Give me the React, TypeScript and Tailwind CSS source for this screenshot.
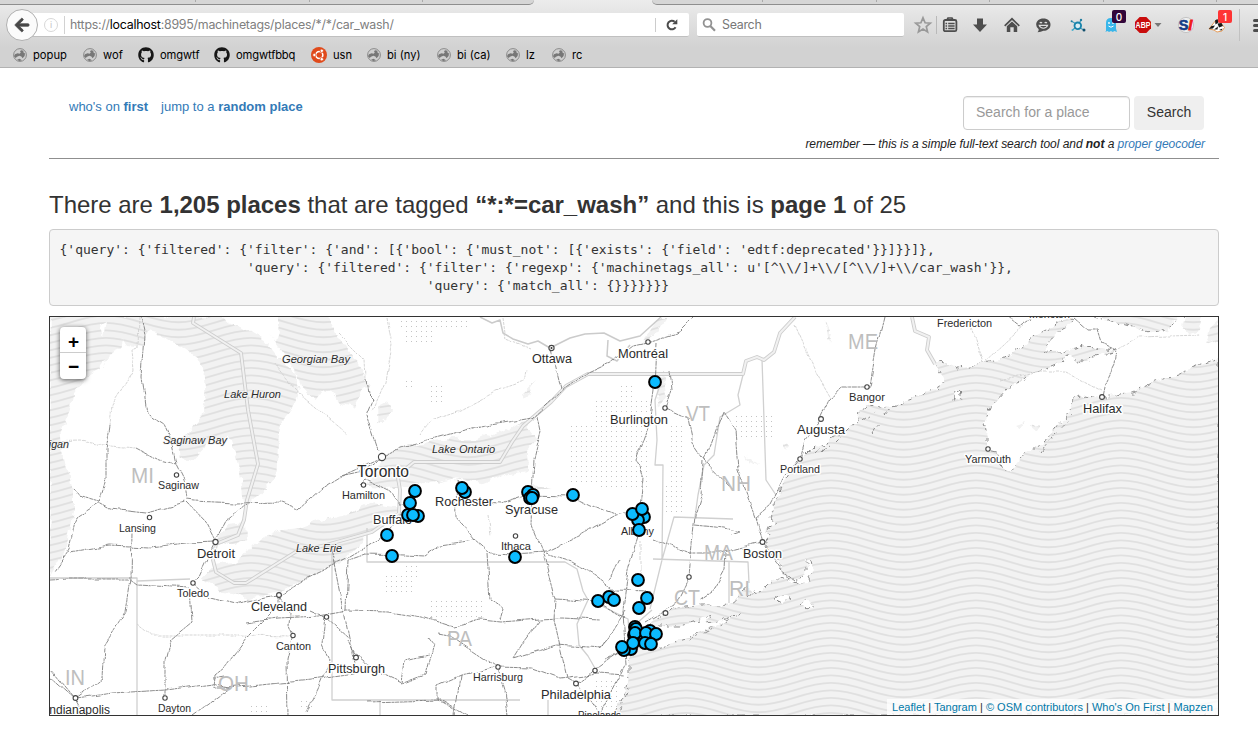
import React from "react";
import { FaGithub, FaArrowLeft } from "react-icons/fa";

const T = 145;
const GAP = 7.5;
const AMP = 7.2;

const wavePath = Array.from({ length: 25 }, (_, i) => {
  const y = i * GAP - 15;
  const h = T / 2;
  const c = h * 0.3642;
  return `M0 ${y + AMP}C${c} ${y + AMP} ${h - c} ${y - AMP} ${h} ${y - AMP}C${h + c} ${y - AMP} ${T - c} ${y + AMP} ${T} ${y + AMP}`;
}).join("");

// [text, left, right, baseline, size]
type Label = [string, number, number, number, number];

const cities: Label[] = [
  ["Ottawa", 532, 572, 363, 13],
  ["Montréal", 618, 668, 358, 12.5],
  ["Burlington", 610, 668, 424, 12.5],
  ["Bangor", 849, 885, 401, 11],
  ["Augusta", 797, 845, 434, 13],
  ["Portland", 780, 820, 473, 11],
  ["Fredericton", 937, 992, 327, 10.5],
  ["Moncton", 1029, 1070, 318, 10.5],
  ["Halifax", 1083, 1122, 412.5, 13],
  ["Yarmouth", 965, 1011, 463, 11],
  ["Toronto", 357, 409, 477, 16],
  ["Hamilton", 342, 385, 499, 11.5],
  ["Rochester", 435, 493, 506, 13],
  ["Syracuse", 505, 558, 514, 13],
  ["Buffalo", 373, 412, 524, 12.5],
  ["Ithaca", 501, 531, 549.5, 11],
  ["Albany", 621, 654, 535, 11],
  ["Boston", 743, 782, 558, 13],
  ["Saginaw", 158, 199, 489, 11.5],
  ["Lansing", 119, 156, 531.5, 11],
  ["Detroit", 197, 235, 558, 13],
  ["Toledo", 177, 209, 597, 11],
  ["Cleveland", 251, 307, 610.5, 13],
  ["Canton", 276, 311, 649.5, 11],
  ["Pittsburgh", 328, 385, 673, 12.5],
  ["Harrisburg", 473, 523, 681, 11],
  ["Philadelphia", 541, 611, 699, 13],
  ["Dayton", 158, 191, 712, 11],
  ["Indianapolis", 46, 110, 714, 12.5],
  ["Pinelands", 578, 621, 719, 11],
];

const waters: Label[] = [
  ["Georgian Bay", 282, 350, 363, 11],
  ["Lake Huron", 224, 281, 398, 11],
  ["Saginaw Bay", 163, 227, 444, 11],
  ["Lake Michigan", 0, 69, 448, 11],
  ["Lake Ontario", 432, 495, 453, 11],
  ["Lake Erie", 296, 342, 552, 11],
];

const states: Label[] = [
  ["MI", 131, 154, 483, 22],
  ["ME", 848, 878, 349, 22],
  ["VT", 686, 710, 421, 22],
  ["NH", 721, 751, 491, 22],
  ["MA", 704, 733, 560, 22],
  ["CT", 674, 700, 605, 22],
  ["RI", 729, 750, 596, 22],
  ["PA", 447, 472, 646, 22],
  ["OH", 218, 249, 691, 22],
  ["IN", 65, 85, 685, 22],
];

const dots: [number, number, number][] = [
  [551.5, 348, 2.6], [648, 342, 2.2], [665, 408, 2.2], [867, 387, 2.2], [821, 419, 2.4],
  [800, 459, 2.2], [1102, 397, 2.4], [988, 449, 2.2], [382, 457, 3.6], [363.5, 485, 2.2],
  [515.5, 536, 2.2], [762.5, 542, 2.4], [176.5, 475, 2.2], [149.5, 517.5, 2.2], [215.5, 542, 2.6],
  [193, 583, 2.2], [279, 595, 2.4], [293, 635.5, 2.2], [326.5, 617, 2.2], [356, 657.5, 2.4],
  [498, 667, 2.2], [576, 683.5, 2.4], [595, 670.5, 2.2], [165, 698, 2.2], [75.5, 698, 2.4],
  [689, 577, 2.2], [665.5, 613, 2.4],
];

const markers: [number, number][] = [
  [655, 382], [415, 491], [410, 503], [408, 515], [418, 516], [413, 515], [387, 535], [392, 556],
  [465, 492], [462, 488], [528, 492], [533, 495], [530, 498], [532, 498], [573, 495], [515, 557],
  [644, 517], [638, 520], [632.5, 514], [642, 509], [639, 530], [638, 580], [647, 598], [639, 608],
  [609, 597], [598, 601], [614, 600], [635, 627], [636, 629], [634, 635], [635, 633], [650, 631],
  [646, 633], [656, 634], [645, 643], [651, 644], [631, 649], [624, 650], [633, 643], [622, 647],
];

const ocean =
  "M613 716L620 703L625 690L629 672L629 657L633 655L641 641L645 627L656 618L667 613L675 607L700 605L723 605L732 603L738 598L743 590L747 585L752 594L762 591L770 583L780 578L790 582L800 583L808 582L813 572L811 562L804 558L808 565L806 574L797 580L788 579L783 575L782 565L776 557L772 553L764 543L770 535L767 530L777 523L770 518L774 510L773 504L777 495L787 477L796 462L807 453L815 445L823 447L830 438L843 433L850 426L857 425L859 412L867 405L880 407L897 404L912 399L930 390L938 389L944 378L937 366L939 361L957 368L971 367L983 363L1000 360L1011 354L1020 348L1029 340L1037 335L1053 327L1067 317L1073 320L1060 332L1048 342L1043 351L1060 352L1085 347L1117 350L1098 356L1078 362L1070 355L1062 362L1047 368L1025 378L1003 393L990 408L985 422L988 437L988 450L997 452L1002 466L1010 473L1018 462L1027 450L1035 450L1043 445L1058 424L1070 410L1076 398L1087 395L1095 397L1107 398L1120 394L1133 392L1150 384L1167 377L1180 375L1187 370L1205 363L1219 358V716Z";

const lakes = [
  "M5 15L520 20L540 40L600 60L650 90L690 140L740 190L755 240L735 290L700 330L690 400L685 500L640 550L590 590L575 480L545 380L500 385L460 420L430 455L395 440L390 400L415 375L435 350L460 320L475 250L470 190L445 140L390 100L340 85L325 65L300 60L285 110L240 105L225 85L215 115L180 130L170 170L110 200L75 250L70 290L35 370L40 420L60 480L75 540L75 600L60 690L40 740L5 800Z",
  "M690 15H840L870 80L900 120L926 150L966 230L940 240L916 290L876 280L850 245L820 240L800 270L760 230L740 180L690 110L670 80L690 60Z",
  "M991 290L1020 275L1036 285L1034 305L991 340Z",
  "M956 530L985 470L1006 440L1056 412L1116 400L1206 385L1270 380L1276 365L1330 378L1390 345L1430 340L1476 315L1436 350L1466 390L1436 420L1441 480L1380 490L1300 520L1226 505L1146 520L1056 530L1000 535Z",
  "M460 805L500 765L560 755L590 735L620 700L700 660L750 655L800 635L900 610L976 580L1056 590L1040 630L976 660L890 750L800 790L720 835L690 850L600 870L560 850L520 845Z",
  "M505 690L540 645L590 640L595 690L560 705Z",
];

const islands =
  "M644 631L655 626L680 626L700 620L711 615L706 622L722 620L740 613L725 621L706 630L690 637L665 645L646 649ZM775 600L783 594L791 598L780 603ZM800 607L808 600L813 608ZM953 400L957 388L962 399Z";

const borders = [
  "M194 317L193 323L241 353L248 410L258 464L247 500L244 520L238 535L216 544L213 560L216 572L234 583H246L297 551L326 545L372 532L399 513L400 490L398 478L403 471L414 462H500L512 442L523 426L538 413L551 402L566 386L588 374H743L746 361L757 357L764 360L774 352L780 333L795 317",
  "M912 317L915 331L929 337L927 350L935 364",
];

const stateLines =
  "M50 578H137V716M137 581L190 579M332 548V700H520M367 528V562H565L577 569L583 591L588 600L577 624L579 645L588 656L596 670M600 605L628 619L629 630L652 610M662 560L650 609M662 560L674 517L733 519M662 379L655 400L657 440L655 465L663 465L662 560M743 375L738 395L740 405L720 417L714 455L704 465L698 495L695 517M762 359L766 480L776 495M653 559L748 562L749 583M729 562V603M548 700V716M380 700V716";

const riverLines =
  "M480 317L492 323L500 320L503 333L513 339L528 344L538 341L550 348L570 338L585 334L604 333L620 341L640 336L661 317M608 340L607 356L617 361L630 345";

const roads = [
  "M141 317L145 335L142 376L147 414L164 425L171 440L176 464L184 480L187 500L195 501L235 503L281 502L299 509L322 488L348 472L382 457L400 448L440 438L480 427L532 418L560 392L589 372L613 361L634 345L648 342L679 332L694 317",
  "M110 425L106 450L106 480L99 503L110 509L145 513L186 503M137 448L160 460L176 464M187 503L205 522L215 541L226 520L245 504M99 503L77 517L70 548L55 570M74 488L81 497L99 502",
  "M70 552L110 545L150 547L187 543L215 542L199 577L193 583L210 598L235 604L265 597L279 595L304 579L345 560L387 535L410 503",
  "M50 580L70 579L129 579L137 585L190 588L192 622L170 640L165 660V698M132 532L131 579L126 612L104 647L102 678L75 698L50 668M75 698L113 693L165 690L213 684L228 688L312 680L356 674L332 548M50 676L75 698L85 716M191 716L230 688L214 688L215 675L224 668L247 638L279 606L279 595M224 676L213 678",
  "M279 595L290 614L289 625L293 635L287 660L288 716M247 622L277 618L320 616L348 611L389 612L422 617L454 627L481 620L501 622L540 619L560 618L600 620M310 610L326 617L348 637M326 617L323 645L330 660L318 690L307 712",
  "M347 611L349 560L366 554L405 555L425 556L441 545L475 540L490 553L513 554L545 552L580 535L615 515L639 510M475 540L457 518L456 480L465 502L500 504L526 495L573 496L591 505L615 514",
  "M551 348L561 389M538 415L541 430L534 460L532 495M532 495L531 525L545 560L555 599L554 620L567 678L576 683M656 342L654 390L649 425L637 460L643 480L640 505L638 535L628 570L623 610L625 650L605 660M665 408L688 418L693 443L705 461L733 490M665 408L671 390L669 370",
  "M705 461L720 420L723 412L735 430L738 470L756 520M703 462L701 495L695 515L691 555L689 577L675 605L645 622M653 538L670 545L690 553L720 553L762 542L782 570L795 580M695 525L725 528L740 532L731 535M727 553L726 570L715 590L700 600",
  "M884 317L876 350L870 387L842 387L830 400L821 419L805 440L800 459L783 480L770 505L755 518L762 542",
  "M487 553L490 600L503 609L500 620M427 637L433 645L425 675L402 684L405 660L428 655M439 633L450 635L475 652L498 667L532 668L560 678L600 673L624 675M498 667L505 690L508 716M498 667L460 675L437 685L437 700L455 710M460 675L455 716",
  "M555 599L598 602L625 617M540 620L525 640L514 658L556 645L602 648L625 610M576 683L602 665L627 645M576 683L590 700L600 714L625 665L624 650M402 684L380 674L353 653L347 640M367 702L440 700L468 716",
  "M1007 317L1020 327L1035 317M1073 317L1088 330L1098 330L1102 343L1117 350L1115 365L1104 387L1102 397M340 475L363 470L382 457M366 380L368 395L373 400L367 415L378 450",
  "M545 554L572 562L595 575L615 590L650 591M360 485L365 480L390 492L398 505L404 505M620 560L610 580M608 640L600 649",
];

const lightRoads =
  "M139 317L138 347L132 350L134 371L112 405L110 425M50 442L80 441L110 446L137 448M137 625L150 635L240 635L293 636M386 317L391 345L385 382L373 410M340 335L365 360L366 380M419 434L430 420L460 410L495 392L525 382L527 370M795 325L815 370L831 398M971 327L983 363L1025 325M1000 380L1040 371L1065 371L1101 390M1120 350L1140 337L1200 335M273 362L298 393L315 407L348 434M640 540L640 580M502 317L505 340L530 350M487 515L490 535";

const dotRects: [number, number, number, number][] = [
  [400, 319, 68, 12], [405, 331, 28, 14], [402, 380, 12, 10], [430, 385, 12, 18],
  [595, 398, 55, 45], [570, 425, 50, 60], [600, 445, 50, 45], [620, 385, 15, 13],
  [670, 425, 15, 60], [665, 485, 18, 30], [735, 415, 40, 25], [385, 575, 30, 18],
  [430, 598, 55, 20], [404, 565, 14, 12], [595, 680, 25, 30], [250, 703, 20, 12], [300, 700, 15, 10],
];

function WorldMap() {
  return (
    <svg viewBox="50 317 1168 398" className="block h-full w-full" fontFamily='"Liberation Sans", sans-serif'>
      <defs>
        <pattern id="waves" x="903.5" y="1" width={T} height={150} patternUnits="userSpaceOnUse">
          <rect width={T} height={150} fill="#f2f2f2" />
          <path d={wavePath} transform="translate(0 -.9)" fill="none" stroke="#e0e0e0" strokeWidth="1.9" />
        </pattern>
        <pattern id="grain" width="5" height="5" patternUnits="userSpaceOnUse">
          <rect x="1" y="1" width="1" height="1" fill="#c4c4c4" />
        </pattern>
        <filter id="rough" filterUnits="userSpaceOnUse" x="40" y="307" width="1190" height="420">
          <feTurbulence type="fractalNoise" baseFrequency="0.1" numOctaves="3" seed="4" />
          <feDisplacementMap in="SourceGraphic" scale="8" xChannelSelector="R" yChannelSelector="G" />
        </filter>
        <filter id="wobble" filterUnits="userSpaceOnUse" x="40" y="307" width="1190" height="420">
          <feTurbulence type="fractalNoise" baseFrequency="0.045" numOctaves="2" seed="9" />
          <feDisplacementMap in="SourceGraphic" scale="7" xChannelSelector="R" yChannelSelector="G" />
        </filter>
        <mask id="seaMask" maskUnits="userSpaceOnUse" x="40" y="307" width="1190" height="420">
          <g filter="url(#rough)">
            <path d={ocean} fill="white" />
            <path d="M1093 310L1105 320L1120 323L1140 329L1153 333L1167 330L1183 312ZM1188 310L1182 325L1190 334L1200 330L1202 312ZM1219 320L1210 328L1206 345L1219 340Z" fill="white" />
            <path d="M661 317L640 345L655 335L668 317ZM656 385L664 372L667 395L660 408ZM825 320L832 335L829 343ZM745 455L758 466L748 463ZM784 444L790 445L787 450ZM522 394L535 382L524 400ZM1030 425L1040 424L1036 430ZM1015 425L1024 422L1020 428ZM530 486L552 488L535 490Z" fill="white" />
            <g transform="translate(48 310) scale(.3333333)" fill="white">
              {lakes.map((d, i) => (
                <path key={i} d={d} />
              ))}
            </g>
            <path d={islands} fill="black" />
            <path d="M100 325L106 322L103 336ZM100 365L106 358L103 375L98 388ZM270 335L280 325L276 343ZM455 440L470 428L485 435L475 440ZM500 425L520 423L510 430Z" fill="black" />
          </g>
        </mask>
      </defs>
      <rect x="50" y="317" width="1168" height="398" fill="#fff" />
      {dotRects.map(([x, y, w, h], i) => (
        <rect key={i} x={x} y={y} width={w} height={h} fill="url(#grain)" />
      ))}
      <rect x="50" y="317" width="1168" height="398" fill="url(#waves)" mask="url(#seaMask)" />
      <g filter="url(#rough)" fill="none" stroke="#8b8b8b" strokeWidth="1" strokeDasharray="5 3 2 6">
        <path d={ocean} />
        <path d={islands} />
        <path d="M1093 317L1120 323L1153 333L1167 330L1183 317M823 452L833 440M815 452L825 440M835 443L845 433M862 422L875 412M872 432L880 420M883 417L893 405M1040 452L1056 432L1072 415M748 598L756 588M690 640L720 625M620 712L630 685" />
      </g>
      <g fill="none" strokeLinejoin="round">
        <path d={stateLines} stroke="#d0d0d0" strokeWidth="1.3" />
        {borders.map((d, i) => (
          <g key={i}>
            <path d={d} stroke="#cdcdcd" strokeWidth="3.8" />
            <path d={d} stroke="#f1f1f1" strokeWidth="2" />
          </g>
        ))}
        <path d={riverLines} stroke="#cbcbcb" strokeWidth="1.5" />
      </g>
      <g filter="url(#wobble)" fill="none" strokeLinejoin="round">
        <path d={lightRoads} stroke="#d0d0d0" strokeWidth=".9" strokeDasharray="3 1" />
        {roads.map((d, i) => (
          <path key={i} d={d} stroke="#777" strokeWidth=".85" strokeDasharray="5 .7 3 .7" />
        ))}
      </g>
      {states.map(([t, a, b, y, s]) => (
        <text key={t} x={a} y={y} fontSize={s} textLength={b - a} lengthAdjust="spacingAndGlyphs" fill="#bebebe">
          {t}
        </text>
      ))}
      {dots.map(([x, y, r], i) => (
        <circle key={i} cx={x} cy={y} r={r} fill="#fff" stroke="#444" strokeWidth="1.1" />
      ))}
      <circle cx="551.5" cy="348" r="1" fill="#333" />
      {cities.map(([t, a, b, y, s]) => (
        <text key={t} x={a} y={y} fontSize={s} textLength={b - a} lengthAdjust="spacingAndGlyphs" fill="#2b2b2b" stroke="#fff" strokeWidth="3" strokeLinejoin="round" paintOrder="stroke">
          {t}
        </text>
      ))}
      {waters.map(([t, a, b, y, s]) => (
        <text key={t} x={a} y={y} fontSize={s} textLength={b - a} lengthAdjust="spacingAndGlyphs" fontStyle="italic" fill="#2b2b2b" stroke="#f5f5f5" strokeWidth="1.5" paintOrder="stroke">
          {t}
        </text>
      ))}
      {markers.map(([x, y], i) => (
        <circle key={i} cx={x} cy={y} r="5.9" fill="#0cbbff" stroke="#000" strokeWidth="2" />
      ))}
    </svg>
  );
}

function Globe() {
  return (
    <svg viewBox="0 0 14 14" className="h-3.5 w-3.5 shrink-0">
      <circle cx="7" cy="7" r="6.4" fill="#cfcfcf" stroke="#8a8a8a" strokeWidth="1" />
      <path d="M1 8.3L2 6.2L4.6 5.2L6.6 5.8L7.8 4.4L7 3.4L8 2.2L10.5 2.8L10.3 4.2L12 5.4L11.6 8L9.6 10.2L8.4 8.6L6.4 7.8L4 8.7L2.6 10ZM4 11.8L6.5 10.8L9 12.2L6.5 13.1Z" fill="#777" />
    </svg>
  );
}

function Ubuntu() {
  return (
    <svg viewBox="0 0 16 16" className="h-4 w-4 shrink-0">
      <circle cx="8" cy="8" r="8" fill="#e04a1b" />
      <circle cx="8.3" cy="8" r="3.5" fill="none" stroke="#fff" strokeWidth="1.6" />
      <g fill="#fff" stroke="#e04a1b" strokeWidth=".8">
        <circle cx="3.4" cy="8" r="1.7" />
        <circle cx="10.8" cy="3.8" r="1.7" />
        <circle cx="10.8" cy="12.2" r="1.7" />
      </g>
    </svg>
  );
}

function Bookmark({ icon, label, className }: { icon: React.ReactNode; label: string; className: string }) {
  return (
    <div className={`flex shrink-0 items-center whitespace-nowrap text-[11.2px] leading-4 text-black ${className}`}>
      {icon}
      <span className="ml-1.5">{label}</span>
    </div>
  );
}

const bookmarks = [
  { icon: <Globe />, label: "popup", className: "w-[70px]" },
  { icon: <Globe />, label: "wof", className: "w-[55px]" },
  { icon: <FaGithub className="h-4 w-4 shrink-0 text-[#161616]" />, label: "omgwtf", className: "w-[76px] tracking-[-0.1px]" },
  { icon: <FaGithub className="h-4 w-4 shrink-0 text-[#161616]" />, label: "omgwtfbbq", className: "w-[97px] tracking-[-0.15px]" },
  { icon: <Ubuntu />, label: "usn", className: "w-[56px]" },
  { icon: <Globe />, label: "bi (ny)", className: "w-[70px]" },
  { icon: <Globe />, label: "bi (ca)", className: "w-[69px]" },
  { icon: <Globe />, label: "lz", className: "w-[46px]" },
  { icon: <Globe />, label: "rc", className: "w-[40px]" },
];

function ToolbarIcons() {
  const box = "h-5 w-5 shrink-0";
  return (
    <div className="flex h-6 items-center text-[#4d4d4d]">
      <svg viewBox="0 0 20 20" className={`${box} ml-[9px]`}>
        <path d="M10 2.8L12.1 7.8L17.3 8.2L13.3 11.6L14.6 17L10 14.1L5.4 17L6.7 11.6L2.7 8.2L7.9 7.8Z" fill="none" stroke="#999" strokeWidth="1.7" />
      </svg>
      <div className="ml-[3px] h-[18px] w-px bg-[#b9b9b9]" />
      <svg viewBox="0 0 20 20" className={`${box} ml-[3px]`}>
        <rect x="3.8" y="5" width="12.6" height="11.2" rx="1.5" fill="none" stroke="currentColor" strokeWidth="1.8" />
        <path d="M7 5L8 3H12L13 5" fill="none" stroke="currentColor" strokeWidth="1.7" />
        <path d="M5.5 8.5h1.6M8.2 8.5h6.4M5.5 11h1.6M8.2 11h6.4M5.5 13.5h1.6M8.2 13.5h6.4" stroke="currentColor" strokeWidth="1.3" />
      </svg>
      <svg viewBox="0 0 20 20" className={`${box} ml-[10px]`}>
        <path d="M7 3.5H13V9.5H17L10 17L3 9.5H7Z" fill="currentColor" />
      </svg>
      <svg viewBox="0 0 20 20" className={`${box} ml-[12px]`}>
        <path d="M2.7 10.8L10 3.8L17.3 10.8" fill="none" stroke="currentColor" strokeWidth="1.7" />
        <path d="M4.8 11.3L10 6.4L15.2 11.3V17H11.7V12.3H8.3V17H4.8Z" fill="currentColor" />
      </svg>
      <svg viewBox="0 0 20 20" className={`${box} ml-[11px]`}>
        <path d="M10.4 3.6C14.8 3.6 17.5 6.2 17.5 9.7S14.5 15.8 10.4 15.8Q8 17.2 4.5 17.2Q5.8 16 5.7 14.2Q3.2 12.5 3.2 9.7C3.2 6.2 6 3.6 10.4 3.6Z" fill="currentColor" />
        <path d="M6.2 10.4H14.6Q13.5 13.2 10.4 13.2T6.2 10.4Z" fill="none" stroke="#ddd" strokeWidth="1.1" />
        <path d="M6.8 8.2q1.1-1.6 2.2 0M11.7 8.2q1.1-1.6 2.2 0" fill="none" stroke="#ddd" strokeWidth="1.2" />
      </svg>
      <svg viewBox="0 0 20 20" className={`${box} ml-[15px]`}>
        <path d="M4 6.5L7.5 8.5M4.5 15L7.5 12.5M12 13L16 15M11.5 8L12.8 5.2" stroke="#3d9cbc" strokeWidth="1.1" />
        <circle cx="9.8" cy="10.8" r="3.3" fill="#d9eef5" stroke="#1683ab" strokeWidth="1.8" />
        <circle cx="13" cy="5" r="1.2" fill="#207da0" />
        <circle cx="16" cy="15" r="1.5" fill="#124f6d" />
        <circle cx="3.6" cy="6.3" r="1" fill="#207da0" />
        <circle cx="4.5" cy="15" r="1" fill="#4db2cf" />
      </svg>
      <div className="relative ml-[13px] h-5 w-5 shrink-0">
        <svg viewBox="0 0 20 20" className="h-5 w-5">
          <path d="M5 16V8Q5 3 10 3T15 8V13.5L16 17L13.5 16L11.7 17L10 16L8 17L6.5 16L4 17Z" fill="#38b6ea" />
          <circle cx="8" cy="8" r=".9" fill="#fff" />
          <circle cx="12" cy="8" r=".9" fill="#fff" />
          <path d="M7.5 11q2.5 2.5 5 0" fill="none" stroke="#fff" />
        </svg>
        <span className="absolute -top-[5px] left-[11px] flex h-[13px] w-[14px] items-center justify-center rounded-[2px] bg-[#32063a] text-[10px] leading-none font-medium text-white">0</span>
      </div>
      <svg viewBox="0 0 20 20" className={`${box} ml-[12px]`}>
        <path d="M6.7 2H13.3L18 6.7V13.3L13.3 18H6.7L2 13.3V6.7Z" fill="#c90d0d" />
        <text x="2.6" y="13" fontSize="8.6" fontWeight="700" textLength="14.8" lengthAdjust="spacingAndGlyphs" fill="#fff" fontFamily="Liberation Sans">ABP</text>
      </svg>
      <svg viewBox="0 0 8 8" className="ml-px h-2 w-2 shrink-0">
        <path d="M.5 2H7.5L4 6Z" fill="#777" />
      </svg>
      <svg viewBox="0 0 20 20" className={`${box} ml-[14px]`}>
        <circle cx="10" cy="10" r="7.6" fill="#eee" stroke="#bbb" strokeWidth=".8" />
        <text x="2.8" y="15.2" fontSize="14.5" fontWeight="700" fill="#153e86" stroke="#153e86" strokeWidth=".6" fontFamily="Liberation Sans">S</text>
        <text x="12" y="15.2" fontSize="14.5" fontWeight="700" fontStyle="italic" fill="#f01818" stroke="#f01818" strokeWidth=".9" fontFamily="Liberation Sans">!</text>
      </svg>
      <div className="relative ml-[11px] h-5 w-5 shrink-0">
        <svg viewBox="0 0 20 20" className="h-5 w-5">
          <path d="M2 14L9 5L14 8L17.5 12.5L15 16L10 17L7 15Z" fill="#fff" stroke="#e5944b" strokeWidth=".9" />
          <path d="M1.8 14L4.5 11L8 10.5L6 13.5ZM8 5.5L10.5 4L11.5 7.5L8.5 9.5ZM10.5 8.5L14.5 8L16 11L12 12.5ZM7 14.5L11 11.5L10.5 14.5ZM12 15L15.5 13.5L14.5 15.5Z" fill="#191919" />
        </svg>
        <span className="absolute -top-[5px] left-[11px] flex h-[13px] w-[14px] items-center justify-center rounded-[2px] bg-[#ff3434] text-[10px] leading-none font-medium text-white">1</span>
      </div>
      <div className="ml-[12px] h-8 w-px bg-[#c1c1c1]" />
      <div className="ml-[13px] flex w-[5px] flex-col gap-[2px]">
        <div className="h-[3px] rounded-l bg-[#4d4d4d]" />
        <div className="h-[3px] rounded-l bg-[#4d4d4d]" />
        <div className="h-[3px] rounded-l bg-[#4d4d4d]" />
      </div>
    </div>
  );
}

function Browser() {
  return (
    <header className="flex h-[68px] flex-col border-b border-[#b2b2b2] bg-linear-to-b from-[#ececec] to-[#d2d2d2] to-70% font-['Inter',sans-serif]">
      <div className="flex h-[5px] justify-between">
        <div className="flex w-[534px] rounded-br-[6px] border-b border-[#8e8e8e] bg-[#d6d6d6]">
          <div className="h-[2px] w-[196px] border-r border-[#aaa]" />
          <div className="h-[2px] w-[114px] border-r border-[#aaa]" />
          <div className="h-[2px] w-[113px] border-r border-[#aaa]" />
        </div>
        <div className="flex w-[606px] rounded-bl-[6px] border-b border-[#8e8e8e] bg-[#d6d6d6]">
          <div className="h-[2px] w-[111px] border-r border-[#aaa]" />
          <div className="h-[2px] w-[114px] border-r border-[#aaa]" />
          <div className="h-[2px] w-[113px] border-r border-[#aaa]" />
          <div className="h-[2px] w-[114px] border-r border-[#aaa]" />
          <div className="h-[2px] w-[113px] border-r border-[#aaa]" />
        </div>
      </div>
      <div className="flex h-[40px] items-center">
        <div className="z-10 ml-[6px] flex h-[32px] w-[32px] shrink-0 items-center justify-center rounded-full border border-[#b0b0b0] bg-[#fbfbfb]">
          <FaArrowLeft className="h-[16px] w-[16px] text-[#484848]" stroke="#484848" strokeWidth="24" />
        </div>
        <div className="-ml-[10px] flex h-6 w-[661px] shrink-0 items-center rounded-[2px] border-b border-[#c0c0c0] bg-white">
          <div className="ml-[16px] flex h-[14px] w-[14px] items-center justify-center rounded-full border border-[#d8d8d8] text-[9px] leading-none text-[#c4c4c4]">i</div>
          <div className="ml-[6px] h-[18px] w-px bg-[#d2d2d2]" />
          <div className="ml-[5px] w-[585px] whitespace-nowrap pt-px text-[12.4px] leading-4 tracking-[-0.24px] text-[#808080]">
            https://<span className="text-black">localhost</span>:8995/machinetags/places/*/*/car_wash/
          </div>
          <div className="h-[14px] w-px bg-[#ccc]" />
          <svg viewBox="0 0 14 14" className="ml-[9px] h-3.5 w-3.5">
            <path d="M10.6 9.2A4.3 4.3 0 1 1 9.7 3.8" fill="none" stroke="#4b4b4b" strokeWidth="2" />
            <path d="M12.3 1.2V6.2H7.2Z" fill="#4b4b4b" />
          </svg>
        </div>
        <div className="ml-2 flex h-6 w-[207px] shrink-0 items-center rounded-[2px] border-b border-[#c0c0c0] bg-white pl-[5px]">
          <svg viewBox="0 0 14 14" className="h-3.5 w-3.5">
            <circle cx="5.5" cy="5" r="3.9" fill="none" stroke="#929292" strokeWidth="1.8" />
            <path d="M8.3 8L13 12.7" stroke="#929292" strokeWidth="2.2" />
          </svg>
          <span className="ml-[6px] pt-px text-[12.4px] leading-4 tracking-[-0.28px] text-[#777]">Search</span>
        </div>
        <ToolbarIcons />
      </div>
      <div className="flex h-[18px] items-center pt-px pl-[13px]">
        {bookmarks.map((b) => (
          <Bookmark key={b.label} {...b} />
        ))}
      </div>
    </header>
  );
}

const query = `{'query': {'filtered': {'filter': {'and': [{'bool': {'must_not': [{'exists': {'field': 'edtf:deprecated'}}]}}]},
                        'query': {'filtered': {'filter': {'regexp': {'machinetags_all': u'[^\\\\/]+\\\\/[^\\\\/]+\\\\/car_wash'}},
                                               'query': {'match_all': {}}}}}}}`;

export default function App() {
  return (
    <div className="h-[733px] w-[1258px] overflow-hidden bg-white font-['Liberation_Sans',sans-serif] text-[#333]">
      <Browser />
      <main className="pr-[39px] pl-[49px]">
        <div className="flex h-[91px] justify-between border-b border-[#8f8f8f]">
          <nav className="ml-5 flex gap-[13px] pt-[30px] text-[13px] leading-[18px] text-[#337ab7]">
            <a>who's on <b>first</b></a>
            <a>jump to a <b>random place</b></a>
          </nav>
          <div className="mr-[14px] flex flex-col items-end pt-7">
            <div className="mr-px flex gap-1">
              <div className="flex h-[34px] w-[167px] items-center rounded-[4px] border border-[#ccc] pb-px pl-3 text-[14px] text-[#999] shadow-[inset_0_1px_1px_rgba(0,0,0,0.075)]">Search for a place</div>
              <button className="h-[34px] w-[70px] rounded-[4px] bg-[#efefef] pb-px text-[14px] text-[#333]">Search</button>
            </div>
            <p className="mt-[5px] whitespace-nowrap text-[12px] leading-[18px] tracking-[-0.043px] text-[#222] italic">
              remember — this is a simple full-text search tool and <b>not</b> a <a className="text-[#337ab7]">proper geocoder</a>
            </p>
          </div>
        </div>
        <h1 className="mt-8 text-[24px] leading-[27px] tracking-[-0.018px] whitespace-nowrap">
          There are <b>1,205 places</b> that are tagged <b>“*:*=car_wash”</b> and this is <b>page 1</b> of 25
        </h1>
        <pre className="mt-[11px] h-[77px] rounded-[4px] border border-[#ccc] bg-[#f5f5f5] pt-[10.5px] pl-[9.5px] font-['DejaVu_Sans_Mono',monospace] text-[13px] leading-[18.4px] tracking-[-0.012px]">{query}</pre>
        <div className="relative mt-[10px] h-[400px] border border-[#333]">
          <WorldMap />
          <div className="absolute top-[10px] left-[10px] w-[26px] rounded-[4px] bg-white text-center text-[19px] font-bold text-black shadow-[0_1px_5px_rgba(0,0,0,0.65)]">
            <div className="flex h-[26px] items-center justify-center border-b border-[#ccc]">
              <span className="pt-[5px] pl-px">+</span>
            </div>
            <div className="flex h-[26px] items-center justify-center">
              <span className="pt-[3px] pl-px">−</span>
            </div>
          </div>
          <div className="absolute right-0 bottom-0 h-[16px] w-[331px] bg-white/75 pl-[5px] text-[11px] leading-[16px] tracking-[0.015px] whitespace-nowrap text-[#0078a8]">
            Leaflet <span className="text-[#333]">|</span> Tangram <span className="text-[#333]">|</span> © OSM contributors <span className="text-[#333]">|</span> Who's On First <span className="text-[#333]">|</span> Mapzen
          </div>
        </div>
      </main>
    </div>
  );
}
